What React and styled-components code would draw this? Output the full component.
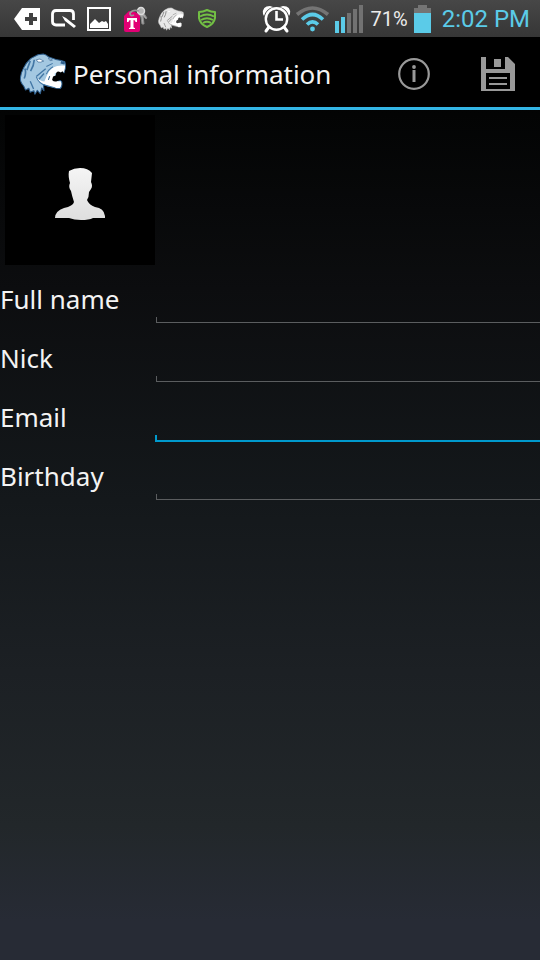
import React from "react";
import styled, { createGlobalStyle } from "styled-components";

const GlobalStyle = createGlobalStyle`
  *, *::before, *::after { box-sizing: border-box; }
  html, body { margin: 0; background: #000; }
  body { font-family: "Noto Sans", "Open Sans", sans-serif; color: #f3f3f3; }
`;

const Screen = styled.div`
  display: flex;
  flex-direction: column;
  min-height: 100vh;
  background: linear-gradient(to bottom, #000 0%, #030404 12%, #0c0d0f 30%, #14181b 52%, #1c2024 70%, #22272a 86%, #272b35 96%, #272b35 100%);
`;

const StatusBar = styled.div`
  display: flex;
  align-items: center;
  justify-content: space-between;
  height: 38px;
  padding: 1px 10px 0 14px;
  background: linear-gradient(to bottom, #474747, #363636);
  border-bottom: 1px solid #000;
  font-family: Roboto, sans-serif;
`;

const StatusGroup = styled.div`
  display: flex;
  align-items: center;
  gap: ${(p) => p.$gap}px;
`;

const Glyph = styled.svg`
  display: block;
  flex: none;
  overflow: visible;
`;

const Percent = styled.span`
  font-size: 20px;
  line-height: 24px;
  color: #ececec;
  margin-left: 2px;
`;

const Clock = styled.time`
  font-size: 24px;
  line-height: 28px;
  color: #5bcbe8;
  margin-left: 5px;
`;

const ActionBar = styled.header`
  display: flex;
  align-items: center;
  height: 72px;
  padding: 2px 0 0 19px;
  background: #000;
  border-bottom: 3px solid #33b5e5;
`;

const Title = styled.h1`
  flex: 1;
  margin: 0 0 0 6px;
  font-size: 26px;
  font-weight: 400;
  line-height: 36px;
  white-space: nowrap;
`;

const ActionButton = styled.button`
  display: flex;
  align-items: center;
  justify-content: center;
  width: 84px;
  height: 64px;
  padding: 0;
  border: 0;
  background: transparent;
  color: #999;
`;

const Photo = styled.button`
  display: flex;
  align-items: center;
  justify-content: center;
  width: 150px;
  height: 150px;
  margin: 5px;
  padding: 8px 0 0;
  border: 0;
  background: #000;
`;

const Form = styled.form`
  display: flex;
  flex-direction: column;
`;

const FieldRow = styled.div`
  display: grid;
  grid-template-columns: 155px 1fr;
  height: 59px;
`;

const Label = styled.label`
  padding-top: 10px;
  font-size: 26px;
  line-height: 38px;
`;

const InputFrame = styled.div`
  display: flex;
  margin: 0 0 ${(p) => (p.$active ? 5 : 6)}px ${(p) => (p.$active ? 0 : 1)}px;
  --line: ${(p) => (p.$active ? "#0099cc" : "#5b5d5f")};
  --weight: ${(p) => (p.$active ? "2px" : "1px")};
  background:
    linear-gradient(var(--line), var(--line)) left bottom / 100% var(--weight) no-repeat,
    linear-gradient(var(--line), var(--line)) left bottom / var(--weight) ${(p) => (p.$active ? 7 : 6)}px no-repeat;
`;

const Input = styled.input`
  width: 100%;
  padding: 0 8px;
  border: 0;
  outline: 0;
  background: transparent;
  color: #fff;
  font: 26px "Noto Sans", sans-serif;
`;

function Tiger({ width, height, outline, fur, stripe, teeth, gap }) {
  return (
    <Glyph width={width} height={height} viewBox="4 6 140 125" aria-hidden="true">
      <path
        d="M59 11 L75 9 Q84 11 91 18 L112 25 Q130 27 139 32 L141 42 Q142 53 137 60 L137 66 L106 84 L119 89 Q128 85 130 93 Q132 106 125 112 Q111 112 105 107 Q87 106 75 99 L77 118 L70 110 L66 127 L57 117 L50 129 L47 118 L36 123 L32 111 L22 116 L17 105 Q5 92 7 79 Q9 64 16 51 Q24 34 38 22 Z"
        fill={fur} stroke={outline} strokeWidth="3" strokeLinejoin="round"
      />
      <path
        d="M140 44 Q118 42 104 49 Q92 57 86 72 L78 91 Q67 91 56 79 Q62 96 82 101 Q98 107 111 110 L124 110 Q131 101 127 91 L109 89 L109 66 L137 62 Z"
        fill={teeth}
      />
      <path d="M146 67 L136 66 L132 60 L127 64 Q116 57 113 66 L112 73 L104 76 L101 86 Q108 94 117 89 Q126 84 130 89 L146 84 Z" fill={gap} />
      <path d="M54 77 Q62 98 82 102 L111 110 M104 47 Q90 54 84 69" fill="none" stroke={stripe} strokeWidth="3" />
      <path d="M94 75 L90 86" fill="none" stroke={outline} strokeWidth="3" />
      <g fill="none" stroke={stripe} strokeWidth="5">
        <path d="M36 30 L26 57 M48 26 Q47 44 37 60 M20 52 Q25 65 18 82" />
        <path d="M82 53 L54 76 M77 67 L62 84 M36 90 L46 113" strokeWidth="4" />
        <path d="M84 46 L103 37" strokeWidth="3" />
      </g>
      <path d="M54 26 Q65 20 76 30 Q66 35 59 33 Z M90 22 L102 27 L95 29 Z" fill={teeth} stroke={outline} strokeWidth="2" />
      <path d="M128 30 L140 34 L137 40 L126 37 Z" fill={outline} />
    </Glyph>
  );
}

function NotificationIcons() {
  return (
    <StatusGroup $gap={11}>
      <Glyph width="26" height="22" viewBox="0 0 26 22">
        <path fill="#fff" d="M8 0H26V22H8L0 11Z" />
        <path fill="#414141" d="M15 5H19V9H23V13H19V17H15V13H11V9H15Z" />
      </Glyph>
      <Glyph width="25" height="20" viewBox="0 0 25 20">
        <path d="M14 16H5Q1.5 16 1.5 12.500V5Q1.500 1.500 5 1.500H19Q22.500 1.500 22.500 5V11" fill="none" stroke="#fff" strokeWidth="2.800" />
        <path d="M11 7L15 9L25 17L23 19L14 12Z" fill="#fff" />
      </Glyph>
      <Glyph width="24" height="24" viewBox="0 0 24 24">
        <path d="M1 1H23V23H1Z" fill="none" stroke="#fff" strokeWidth="2" />
        <path d="M3 21V17L8 12L12 16L15 14L17 15L19 14L21 17V21Z" fill="#fff" />
      </Glyph>
      <Glyph width="25" height="25" viewBox="-2 0 25 25">
        <path d="M5 4L11 5L16 8V23Q16 25 14 25H2Q0 25 0 23V9Z" fill="#e20074" />
        <path d="M15 7L17 10L18 17L20 17L19 9L22 12L23 11L19 5" fill="#aaa" stroke="#888" strokeWidth="1" />
        <circle cx="17" cy="4" r="3.500" fill="#b5b5b5" stroke="#ddd" strokeWidth="1.500" />
        <path d="M15 4Q9 2 6 6Q6 10 10 8" fill="none" stroke="#999" strokeWidth="1.800" />
        <path d="M3 11H13V15H11.500Q11.500 13 9.500 13V20Q9.500 21 11 21V22H5V21Q6.500 21 6.500 20V13Q4.500 13 4.500 15H3Z" fill="#fff" />
      </Glyph>
      <Tiger width={26} height={24} outline="#d4d4d4" fur="#e8e8e8" stripe="#858585" teeth="#fff" gap="#3f3f3f" />
      <Glyph width="24" height="20" viewBox="-3 0 24 20">
        <path d="M9 1Q5 3 1 3V9Q2 15 9 18Q16 15 17 9V3Q13 3 9 1Z" fill="none" stroke="#72bf44" strokeWidth="2" strokeLinejoin="round" />
        <path d="M2 7.500Q9 3.500 16 7.500M3 11Q9 7.500 15 11M5 14Q9 11.500 13 14" fill="none" stroke="#72bf44" strokeWidth="2" />
      </Glyph>
    </StatusGroup>
  );
}

function SystemIcons() {
  return (
    <StatusGroup $gap={6}>
      <Glyph width="27" height="26" viewBox="0 0 27 26">
        <circle cx="13.500" cy="13" r="10.700" fill="none" stroke="#fff" strokeWidth="2.400" />
        <path d="M0 8Q-1 0 7 0L10 1Q3 3 1 10ZM27 8Q28 0 20 0L17 1Q24 3 26 10Z" fill="#fff" />
        <path d="M13.500 5V13.500H20" fill="none" stroke="#fff" strokeWidth="2.600" />
        <path d="M6 21L3 25M21 21L24 25" stroke="#fff" strokeWidth="3" strokeLinecap="round" />
      </Glyph>
      <Glyph width="33" height="26" viewBox="0 0 33 26">
        <g fill="none" strokeWidth="3.600">
          <path d="M1 8.500Q16.500 -4.500 32 8.500" stroke="#747474" />
          <path d="M6 13.500Q16.500 3.500 27 13.500M11 18.500Q16.500 13 22 18.500" stroke="#5bcbe8" />
        </g>
        <circle cx="16.500" cy="23" r="2.400" fill="#5bcbe8" />
      </Glyph>
      <Glyph width="28" height="28" viewBox="0 0 28 28">
        <path d="M0 16H4V28H0ZM6 12H10V28H6Z" fill="#5bcbe8" />
        <path d="M12 8H16V28H12ZM18 4H22V28H18ZM24 0H28V28H24Z" fill="#727272" />
      </Glyph>
      <Percent>71%</Percent>
      <Glyph width="17" height="28" viewBox="0 0 17 28">
        <path d="M4 0H13V3H17V8H0V3H4Z" fill="#747474" />
        <path d="M0 8H17V28H0Z" fill="#5bcbe8" />
      </Glyph>
      <Clock dateTime="14:02">2:02 PM</Clock>
    </StatusGroup>
  );
}

const fields = [
  { id: "fullName", label: "Full name", type: "text" },
  { id: "nick", label: "Nick", type: "text" },
  { id: "email", label: "Email", type: "email", active: true },
  { id: "birthday", label: "Birthday", type: "text" },
];

export default function App() {
  return (
    <Screen>
      <GlobalStyle />
      <StatusBar>
        <NotificationIcons />
        <SystemIcons />
      </StatusBar>
      <ActionBar>
        <Tiger width={48} height={42} outline="#2f608f" fur="#a4c8e1" stripe="#4377a5" teeth="#fff" gap="#000" />
        <Title>Personal information</Title>
        <ActionButton type="button" aria-label="Information">
          <Glyph width="32" height="32" viewBox="0 0 32 32">
            <circle cx="16" cy="16" r="14.800" fill="none" stroke="currentColor" strokeWidth="2.200" />
            <path d="M14.500 12H17.500V24H14.500Z" fill="currentColor" />
            <circle cx="16" cy="9" r="1.900" fill="currentColor" />
          </Glyph>
        </ActionButton>
        <ActionButton type="submit" form="profile" aria-label="Save">
          <Glyph width="34" height="34" viewBox="0 0 34 34">
            <path fillRule="evenodd" fill="currentColor" d="M0 0H5V12H24V0H27L34 7V34H0ZM5 16V32H29V16Z" />
            <path fill="currentColor" d="M13 2H20V10H13ZM8 20H26V22H8ZM8 26H26V28H8Z" />
          </Glyph>
        </ActionButton>
      </ActionBar>
      <main>
        <Photo type="button" aria-label="Profile photo">
          <Glyph width="52" height="54" viewBox="0 0 52 54">
            <defs>
              <linearGradient id="portrait" x1="0" y1="0" x2="0" y2="1">
                <stop offset="0" stopColor="#f5f5f5" />
                <stop offset="1" stopColor="#dedede" />
              </linearGradient>
              <filter id="softEdge"><feGaussianBlur stdDeviation="0.600" /></filter>
            </defs>
            <path
              d="M15 4Q20 1 26 1Q34 1 38 6L37 15Q39 19 37 22L35 25Q35 30 33 33Q35 38 41 40Q50 41 51 49V51H39Q35 53 27 53Q20 53 15 51H1Q1 44 10 41Q19 39 20 35Q18 29 17 24Q14 20 16 16Q14 9 15 4Z"
              fill="url(#portrait)" filter="url(#softEdge)"
            />
          </Glyph>
        </Photo>
        <Form id="profile" onSubmit={(e) => e.preventDefault()}>
          {fields.map((field) => (
            <FieldRow key={field.id}>
              <Label htmlFor={field.id}>{field.label}</Label>
              <InputFrame $active={field.active}>
                <Input id={field.id} name={field.id} type={field.type} />
              </InputFrame>
            </FieldRow>
          ))}
        </Form>
      </main>
    </Screen>
  );
}
